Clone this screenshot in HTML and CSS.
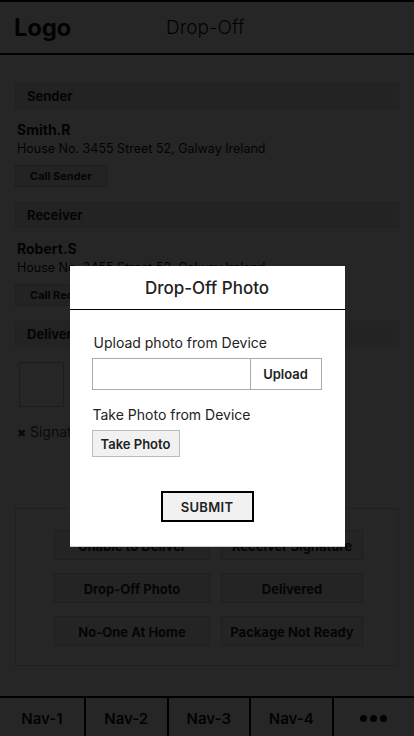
FILE: index.html
```html
<!DOCTYPE html>
<html lang="en">
<head>
<meta charset="utf-8">
<title>Drop-Off</title>
<link rel="stylesheet" href="styles.css">
</head>
<body>
<div class="page">
  <header class="topbar">
    <div class="logo">Logo</div>
    <div class="title">Drop-Off</div>
  </header>

  <main class="content">
    <div class="sec-head">Sender</div>
    <div class="person">
      <div class="name">Smith.R</div>
      <div class="addr">House No. 3455 Street 52, Galway Ireland</div>
      <button class="small-btn">Call Sender</button>
    </div>

    <div class="sec-head">Receiver</div>
    <div class="person">
      <div class="name">Robert.S</div>
      <div class="addr">House No. 3455 Street 52, Galway Ireland</div>
      <button class="small-btn">Call Receiver</button>
    </div>

    <div class="sec-head">Delivery</div>
    <div class="delivery">
      <div class="thumbs">
        <div class="thumb"></div>
        <div class="thumb"></div>
        <div class="thumb"></div>
      </div>
      <div class="sig"><span class="x">&#10006;</span> Signature</div>
    </div>

    <div class="actions">
      <div class="act-grid">
        <button class="act">Unable to Deliver</button>
        <button class="act">Receiver Signature</button>
        <button class="act">Drop-Off Photo</button>
        <button class="act">Delivered</button>
        <button class="act">No-One At Home</button>
        <button class="act">Package Not Ready</button>
      </div>
    </div>
  </main>

  <nav class="navbar">
    <a class="nav-item">Nav-1</a>
    <a class="nav-item">Nav-2</a>
    <a class="nav-item">Nav-3</a>
    <a class="nav-item">Nav-4</a>
    <a class="nav-item more"><span class="dot"></span><span class="dot"></span><span class="dot"></span></a>
  </nav>
</div>

<div class="overlay">
  <div class="modal">
    <div class="modal-head">Drop-Off Photo</div>
    <div class="modal-body">
      <div class="label">Upload photo from Device</div>
      <div class="upload-group">
        <div class="upload-input"></div>
        <button class="upload-btn">Upload</button>
      </div>
      <div class="label label2">Take Photo from Device</div>
      <button class="take-btn">Take Photo</button>
      <div class="submit-row">
        <button class="submit-btn">SUBMIT</button>
      </div>
    </div>
  </div>
</div>
</body>
</html>
```

FILE: styles.css
```css
* { box-sizing: border-box; }

html, body {
  margin: 0;
  padding: 0;
  background: #ffffff;
}

body {
  font-family: Inter, "Open Sans", Arial, sans-serif;
  color: #111;
  width: 414px;
  height: 736px;
  overflow: hidden;
}

button {
  font-family: inherit;
  cursor: pointer;
}

.page {
  height: 736px;
  display: flex;
  flex-direction: column;
}

/* header */
.topbar {
  height: 55px;
  border-top: 2px solid #000;
  border-bottom: 2px solid #000;
  display: flex;
  align-items: center;
  padding-left: 14px;
  flex: none;
}

.logo {
  font-size: 24px;
  font-weight: 700;
  letter-spacing: -0.3px;
  width: 152px;
}

.title {
  font-size: 19px;
  font-weight: 300;
}

/* content */
.content {
  flex: 1;
  padding: 28px 15px 0;
}

.sec-head {
  height: 26px;
  background: #e6e6e6;
  border: 1px solid #dedede;
  display: flex;
  align-items: center;
  padding-left: 11px;
  font-size: 13px;
  font-weight: 700;
  color: #222;
}

.person {
  padding: 12px 0 15px 2px;
}

.name {
  font-size: 14px;
  font-weight: 700;
  line-height: 17px;
}

.addr {
  font-size: 12.5px;
  line-height: 17px;
  margin-top: 2px;
}

.small-btn {
  margin: 8px 0 0 -2px;
  height: 22px;
  padding: 0 14px;
  background: #e6e6e6;
  border: 1px solid #cfcfcf;
  font-size: 11px;
  font-weight: 700;
  color: #222;
}

.delivery {
  padding: 15px 0 0 4px;
}

.thumbs {
  display: flex;
  gap: 12px;
}

.thumb {
  width: 45px;
  height: 45px;
  border: 1px solid #bbb;
}

.sig {
  margin-top: 16px;
  margin-left: -2px;
  font-size: 14px;
  color: #444;
}

.sig .x {
  font-size: 11px;
}

.actions {
  margin-top: 68px;
  border: 1px solid #d8d8d8;
  padding: 21px 37px 19px 38px;
}

.act-grid {
  display: grid;
  grid-template-columns: 156px 142px;
  column-gap: 11px;
  row-gap: 13px;
}

.act {
  height: 30px;
  background: #f2f2f2;
  border: 1px solid #cfcfcf;
  font-size: 13px;
  font-weight: 700;
  color: #222;
  padding: 2px 0 0;
}

/* nav */
.navbar {
  flex: none;
  height: 40px;
  border-top: 2px solid #000;
  display: flex;
}

.nav-item {
  flex: 1;
  display: flex;
  align-items: center;
  justify-content: center;
  border-left: 2px solid #000;
  font-size: 15px;
  font-weight: 600;
  color: #111;
  padding-top: 2px;
}

.nav-item:first-child {
  border-left: none;
  flex: 0 0 84px;
}

.nav-item.more {
  gap: 3px;
}

.dot {
  width: 7px;
  height: 7px;
  border-radius: 50%;
  background: #111;
}

/* overlay + modal */
.overlay {
  position: fixed;
  inset: 0;
  background: rgba(0, 0, 0, 0.85);
  display: flex;
  justify-content: center;
  align-items: flex-start;
  padding-top: 266px;
}

.modal {
  width: 275px;
  height: 281px;
  background: #fff;
  border-bottom: 1px solid #ccc;
}

.modal-head {
  height: 44px;
  border-bottom: 1px solid #000;
  display: flex;
  align-items: center;
  justify-content: center;
  font-size: 17px;
  font-weight: 500;
  color: #222;
}

.modal-body {
  padding: 24px 23px 0 22px;
}

.label {
  font-size: 14px;
  color: #222;
  padding-left: 2px;
  line-height: 17px;
}

.label2 {
  padding-left: 1px;
  margin-top: 16px;
}

.upload-group {
  margin-top: 7px;
  display: flex;
  height: 32px;
  border: 1px solid #aaa;
  width: 230px;
}

.upload-input {
  flex: 1;
  border-right: 1px solid #aaa;
}

.upload-btn {
  width: 70px;
  border: none;
  background: #fff;
  font-size: 13px;
  font-weight: 600;
  color: #222;
  padding: 0;
}

.take-btn {
  margin-top: 7px;
  width: 88px;
  height: 27px;
  background: #f1f1f1;
  border: 1px solid #bbb;
  font-size: 13px;
  font-weight: 600;
  color: #222;
  padding: 0;
}

.submit-row {
  margin-top: 34px;
  display: flex;
  justify-content: center;
  padding-left: 1px;
}

.submit-btn {
  width: 93px;
  height: 31px;
  border: 2px solid #000;
  background: #f1f1f1;
  font-size: 13px;
  font-weight: 600;
  letter-spacing: 0.3px;
  color: #222;
  padding: 0;
}
```
